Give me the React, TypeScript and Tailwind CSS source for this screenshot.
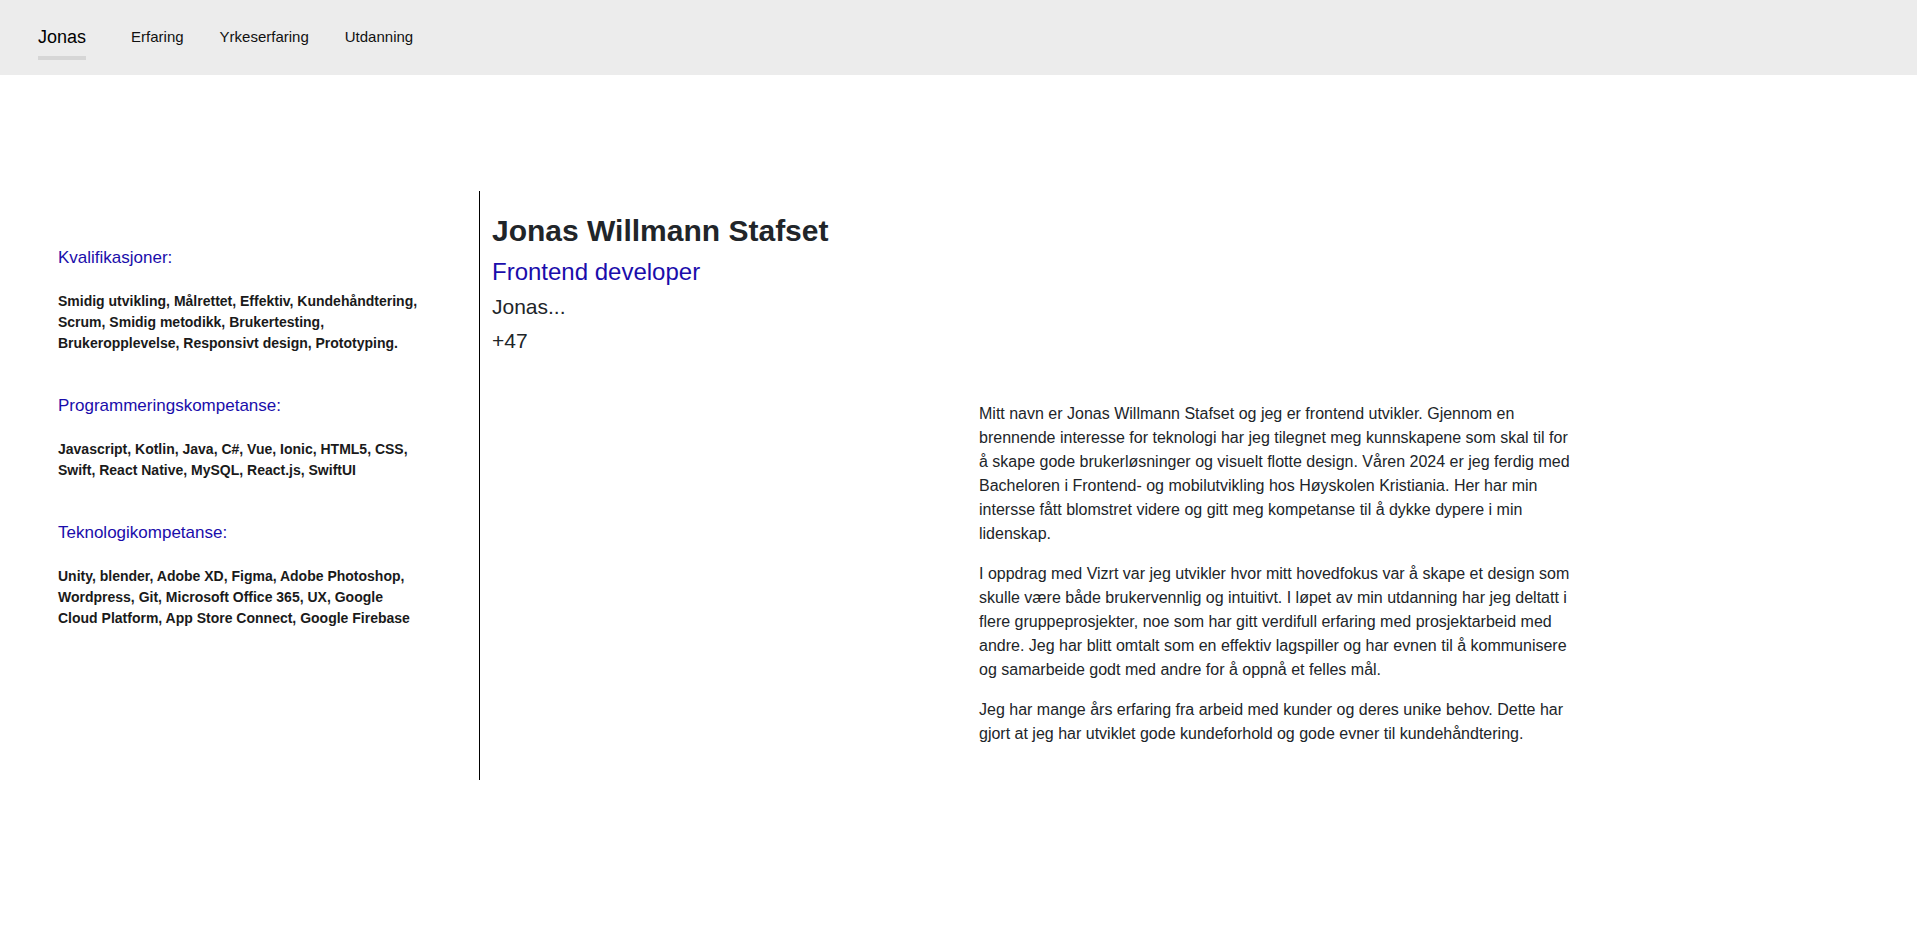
const skills = [
    {
        title: "Kvalifikasjoner:",
        text: "Smidig utvikling, Målrettet, Effektiv, Kundehåndtering, Scrum, Smidig metodikk, Brukertesting, Brukeropplevelse, Responsivt design, Prototyping.",
    },
    {
        title: "Programmeringskompetanse:",
        text: "Javascript, Kotlin, Java, C#, Vue, Ionic, HTML5, CSS, Swift, React Native, MySQL, React.js, SwiftUI",
    },
    {
        title: "Teknologikompetanse:",
        text: "Unity, blender, Adobe XD, Figma, Adobe Photoshop, Wordpress, Git, Microsoft Office 365, UX, Google Cloud Platform, App Store Connect, Google Firebase",
    },
];

const paragraphs = [
    "Mitt navn er Jonas Willmann Stafset og jeg er frontend utvikler. Gjennom en brennende interesse for teknologi har jeg tilegnet meg kunnskapene som skal til for å skape gode brukerløsninger og visuelt flotte design. Våren 2024 er jeg ferdig med Bacheloren i Frontend- og mobilutvikling hos Høyskolen Kristiania. Her har min intersse fått blomstret videre og gitt meg kompetanse til å dykke dypere i min lidenskap.",
    "I oppdrag med Vizrt var jeg utvikler hvor mitt hovedfokus var å skape et design som skulle være både brukervennlig og intuitivt. I løpet av min utdanning har jeg deltatt i flere gruppeprosjekter, noe som har gitt verdifull erfaring med prosjektarbeid med andre. Jeg har blitt omtalt som en effektiv lagspiller og har evnen til å kommunisere og samarbeide godt med andre for å oppnå et felles mål.",
    "Jeg har mange års erfaring fra arbeid med kunder og deres unike behov. Dette har gjort at jeg har utviklet gode kundeforhold og gode evner til kundehåndtering.",
];

const Navbar = () => (
    <nav className="h-[75px] bg-[#ececec] flex items-start pl-[38px]">
        <div className="inline-flex flex-col pt-[26px]">
            <span className="text-[18px] leading-[22px] text-black">Jonas</span>
            <span className="mt-[8px] h-[4px] w-full bg-[#d6d6d6]" />
        </div>
        <div className="flex gap-[36px] ml-[45px] pt-[27px] text-[15px] leading-[20px] text-[#111]">
            <a href="#erfaring">Erfaring</a>
            <a href="#yrkeserfaring">Yrkeserfaring</a>
            <a href="#utdanning">Utdanning</a>
        </div>
    </nav>
);

export default function App() {
    return (
        <div className="min-h-screen bg-white font-['Liberation_Sans',Arial,sans-serif] text-[#212529]">
            <Navbar />

            <div className="mt-[116px] flex">
                <aside className="w-[480px] shrink-0 border-r border-black pt-[57px] pl-[58px] pr-[58px]">
                    {skills.map((s, i) => (
                        <div key={s.title} className={i > 0 ? "mt-[42px]" : ""}>
                            <div className="text-[17px] leading-[20px] text-[#1a0dab]">{s.title}</div>
                            <div className="mt-[23px] text-[14px] font-bold leading-[21px] text-[#1a1a1a]">
                                {s.text}
                            </div>
                        </div>
                    ))}
                </aside>

                <main className="flex-1 pt-[22px] pl-[12px] pb-[18px]">
                    <h1 className="text-[30px] font-bold leading-[36px]">Jonas Willmann Stafset</h1>
                    <div className="mt-[7px] text-[24px] leading-[32px] text-[#1a0dab]">Frontend developer</div>
                    <div className="mt-[5px] text-[21px] leading-[28px]">Jonas...</div>
                    <div className="mt-[6px] text-[21px] leading-[28px]">+47</div>

                    <div className="mt-[47px] ml-[487px] w-[598px] text-[16px] leading-[24px]">
                        {paragraphs.map((p, i) => (
                            <p key={i} className="mb-4">{p}</p>
                        ))}
                    </div>
                </main>
            </div>
        </div>
    );
}
